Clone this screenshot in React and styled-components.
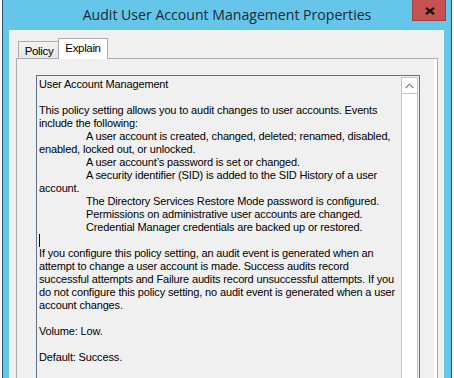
import React from "react";
import styled, { createGlobalStyle } from "styled-components";

const Global = createGlobalStyle`
  html, body { margin: 0; padding: 0; background: #ffffff; overflow: hidden; }
  body { width: 454px; height: 378px; }
  * { box-sizing: border-box; }
`;

const Screen = styled.div`
  display: flex;
  width: 454px;
  height: 378px;
  overflow: hidden;
  background: #fbfbfb;
`;

const Window = styled.div`
  margin-left: 2px;
  width: 450px;
  height: 420px;
  flex: none;
  background: #66c6ea;
  border-left: 1px solid #2c4d62;
  border-right: 1px solid #2c4d62;
  display: flex;
  flex-direction: column;
`;

const TitleBar = styled.div`
  height: 30px;
  display: grid;
  grid-template-columns: 1fr auto 1fr;
  flex: none;
`;

const Title = styled.div`
  grid-column: 2;
  font-family: "Open Sans", "Noto Sans", sans-serif;
  font-size: 14.1px;
  color: #1b2a38;
  line-height: 30px;
  white-space: nowrap;
`;

const CloseButton = styled.div`
  grid-column: 3;
  justify-self: end;
  align-self: start;
  margin-right: 5px;
  width: 34px;
  height: 21px;
  background: #c75050;
  border: 1px solid #9c4040;
  border-top: none;
  display: flex;
  align-items: center;
  justify-content: center;
  padding-left: 2px;
  padding-top: 1px;
`;

const Client = styled.div`
  margin: 0 7px 0 6px;
  flex: 1;
  background: #f0f0f0;
  border: 1px solid #edf2f5;
  border-bottom: none;
  padding: 0 5px 0 6px;
  display: flex;
  flex-direction: column;
`;

const TabRow = styled.div`
  height: 27px;
  display: flex;
  align-items: flex-end;
  padding-left: 2px;
  flex: none;
`;

const Tab = styled.div`
  position: relative;
  z-index: ${(p) => (p.$active ? 2 : 1)};
  height: ${(p) => (p.$active ? "21px" : "17px")};
  width: ${(p) => (p.$active ? "50px" : "40px")};
  margin-bottom: ${(p) => (p.$active ? "-1px" : "0")};
  background: ${(p) =>
    p.$active ? "#ffffff" : "linear-gradient(#f2f2f2, #e6e6e6)"};
  border: 1px solid #acacac;
  border-bottom: none;
  border-right: ${(p) => (p.$active ? "1px solid #acacac" : "none")};
  font-family: "Liberation Sans", Arial, sans-serif;
  font-size: 11.5px;
  letter-spacing: -0.35px;
  color: #000;
  display: flex;
  justify-content: center;
  align-items: ${(p) => (p.$active ? "flex-start" : "center")};
  padding-top: ${(p) => (p.$active ? "3px" : "1px")};
  padding-left: ${(p) => (p.$active ? "0" : "1px")};
`;

const Pane = styled.div`
  flex: 1;
  border: 1px solid #adadad;
  border-bottom: none;
  background: #f0f0f0;
  box-shadow: inset -3px 0 0 #ffffff;
  padding: 16px 17px 0 19px;
`;

const TextBox = styled.div`
  height: 330px;
  border: 1px solid #5f7287;
  background: #f0f0f0;
  display: flex;
`;

const TextArea = styled.div`
  flex: 1;
  padding: 2px 0 0 2px;
  font-family: "Liberation Sans", Arial, sans-serif;
  font-size: 11px;
  letter-spacing: -0.15px;
  line-height: 13px;
  color: #000;
  overflow: hidden;
`;

const Line = styled.div`
  height: 13px;
  white-space: pre;
  padding-left: ${(p) => (p.$indent ? "47px" : "0")};
`;

const Caret = styled.span`
  display: inline-block;
  width: 1px;
  height: 13px;
  background: #000;
  vertical-align: top;
`;

const ScrollBar = styled.div`
  width: 17px;
  margin: 1px 1px 0 0;
  background: #ffffff;
  border-left: 1px solid #c4c4c4;
  border-right: 1px solid #c4c4c4;
  display: flex;
  flex-direction: column;
  flex: none;
`;

const ScrollButton = styled.div`
  height: 17px;
  border-top: 1px solid #c4c4c4;
  border-bottom: 1px solid #c4c4c4;
  display: flex;
  align-items: center;
  justify-content: center;
`;

const lines = [
  { t: "User Account Management" },
  { t: "" },
  { t: "This policy setting allows you to audit changes to user accounts. Events" },
  { t: "include the following:" },
  { t: "A user account is created, changed, deleted; renamed, disabled,", i: true },
  { t: "enabled, locked out, or unlocked." },
  { t: "A user account\u2019s password is set or changed.", i: true },
  { t: "A security identifier (SID) is added to the SID History of a user", i: true },
  { t: "account." },
  { t: "The Directory Services Restore Mode password is configured.", i: true },
  { t: "Permissions on administrative user accounts are changed.", i: true },
  { t: "Credential Manager credentials are backed up or restored.", i: true },
  { caret: true },
  { t: "If you configure this policy setting, an audit event is generated when an" },
  { t: "attempt to change a user account is made. Success audits record" },
  { t: "successful attempts and Failure audits record unsuccessful attempts. If you" },
  { t: "do not configure this policy setting, no audit event is generated when a user" },
  { t: "account changes." },
  { t: "" },
  { t: "Volume: Low." },
  { t: "" },
  { t: "Default: Success." },
];

export default function App() {
  return (
    <>
      <Global />
      <Screen>
        <Window>
          <TitleBar>
            <Title>Audit User Account Management Properties</Title>
            <CloseButton>
              <svg width="10" height="8" viewBox="0 0 10 8">
                <path d="M1 0.8 L9 7.2 M9 0.8 L1 7.2" stroke="#141414" strokeWidth="2.2" fill="none" />
              </svg>
            </CloseButton>
          </TitleBar>
          <Client>
            <TabRow>
              <Tab>Policy</Tab>
              <Tab $active>Explain</Tab>
            </TabRow>
            <Pane>
              <TextBox>
                <TextArea>
                  {lines.map((l, idx) => (
                    <Line key={idx} $indent={l.i}>
                      {l.caret ? <Caret /> : l.t}
                    </Line>
                  ))}
                </TextArea>
                <ScrollBar>
                  <ScrollButton>
                    <svg width="9" height="6" viewBox="0 0 9 6">
                      <path d="M0.8 5 L4.5 1.2 L8.2 5" stroke="#7a7a7a" strokeWidth="1.1" fill="none" />
                    </svg>
                  </ScrollButton>
                </ScrollBar>
              </TextBox>
            </Pane>
          </Client>
        </Window>
      </Screen>
    </>
  );
}
